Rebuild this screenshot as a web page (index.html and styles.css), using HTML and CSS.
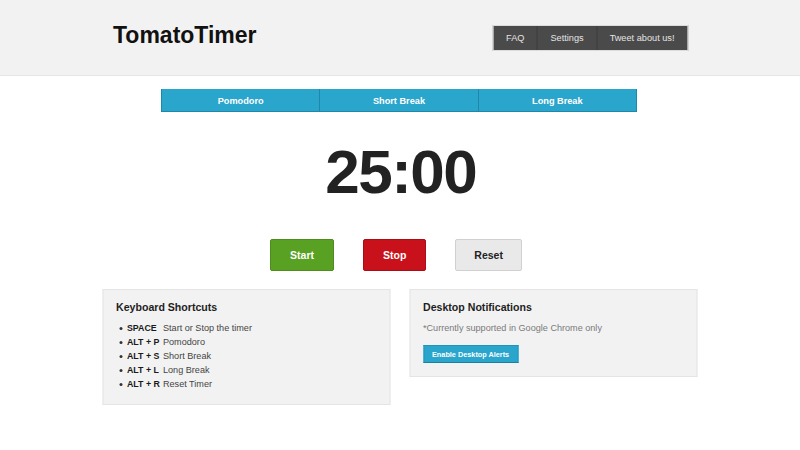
FILE: index.html
```html
<!DOCTYPE html>
<html lang="en">
<head>
<meta charset="utf-8">
<title>TomatoTimer</title>
<link rel="stylesheet" href="styles.css">
</head>
<body>
<header class="header">
  <div class="header-inner">
    <h1 class="logo">TomatoTimer</h1>
    <nav class="nav">
      <a class="nav-item">FAQ</a>
      <a class="nav-item">Settings</a>
      <a class="nav-item">Tweet about us!</a>
    </nav>
  </div>
</header>
<main class="main">
  <div class="tabs">
    <div class="tab">Pomodoro</div>
    <div class="tab">Short Break</div>
    <div class="tab">Long Break</div>
  </div>
  <div class="timer">25:00</div>
  <div class="controls">
    <button class="btn btn-start">Start</button>
    <button class="btn btn-stop">Stop</button>
    <button class="btn btn-reset">Reset</button>
  </div>
  <div class="panels">
    <section class="panel">
      <h2 class="panel-title">Keyboard Shortcuts</h2>
      <ul class="shortcuts">
        <li><span class="key">SPACE</span>Start or Stop the timer</li>
        <li><span class="key">ALT + P</span>Pomodoro</li>
        <li><span class="key">ALT + S</span>Short Break</li>
        <li><span class="key">ALT + L</span>Long Break</li>
        <li><span class="key">ALT + R</span>Reset Timer</li>
      </ul>
    </section>
    <section class="panel">
      <h2 class="panel-title">Desktop Notifications</h2>
      <p class="note">*Currently supported in Google Chrome only</p>
      <button class="alert-btn">Enable Desktop Alerts</button>
    </section>
  </div>
</main>
</body>
</html>
```
FILE: styles.css
```css
* { box-sizing: border-box; }
html, body { margin: 0; padding: 0; background: #fff; }
body {
  font-family: "Liberation Sans", Arial, sans-serif;
  color: #222;
}
.header {
  height: 76px;
  background: #f2f2f2;
  border-bottom: 1px solid #e6e6e6;
  padding-top: 25px;
}
.header-inner {
  width: 575px;
  margin: 0 auto;
  display: flex;
  justify-content: space-between;
  align-items: flex-start;
  transform: translateX(0.5px);
}
.logo {
  margin: 0;
  font-size: 23px;
  line-height: 21px;
  font-weight: bold;
  color: #111;
}
.nav {
  display: flex;
  background: #4a4a4a;
  border: 1px solid #fafafa;
  outline: 1px solid #dcdcdc;
  outline-offset: -1px;
}
.nav-item {
  display: block;
  height: 24px;
  line-height: 24px;
  padding: 0 12.5px;
  font-size: 9.2px;
  color: #e4e4e4;
  background: #4a4a4a;
}
.nav-item + .nav-item { border-left: 1px solid #3c3c3c; }

.main { display: flex; flex-direction: column; align-items: center; }
.tabs {
  margin-top: 13px;
  width: 476px;
  display: flex;
  transform: translateX(-1px);
}
.tab {
  flex: 1;
  height: 23px;
  line-height: 24px;
  text-align: center;
  font-size: 9.2px;
  font-weight: bold;
  color: #fff;
  background: #2aa5cc;
  border-left: 1px solid #1f88aa;
  border-bottom: 1px solid #1f88aa;
}
.tab:last-child { border-right: 1px solid #1f88aa; }
.timer {
  margin-top: 29px;
  font-size: 62px;
  line-height: 62px;
  font-weight: bold;
  letter-spacing: -1.5px;
  color: #222;
  padding-left: 1.5px;
}
.controls {
  margin-top: 36px;
  display: flex;
  gap: 29px;
  padding-right: 8px;
}
.btn {
  height: 32px;
  padding: 0 19px;
  font-family: inherit;
  font-size: 10.5px;
  font-weight: bold;
  border-radius: 2px;
  border: 1px solid;
  color: #fff;
}
.btn-start { background: #59a123; border-color: #4d8c1d; }
.btn-stop { background: #c8111a; border-color: #a80e15; }
.btn-reset { background: #e9e9e9; border-color: #d0d0d0; color: #222; padding: 0 18px; }

.panels {
  margin-top: 18px;
  display: flex;
  gap: 19px;
  align-items: flex-start;
  transform: translateX(-0.5px);
}
.panel {
  width: 288px;
  background: #f2f2f2;
  border: 1px solid #e4e4e4;
  padding: 11px 13px 13px 13px;
}
.panel-title {
  margin: 0;
  font-size: 10.6px;
  line-height: 13px;
  font-weight: bold;
  color: #1e1e1e;
}
.shortcuts {
  list-style: none;
  margin: 7px 0 0 0;
  padding: 0;
}
.shortcuts li {
  position: relative;
  height: 14px;
  line-height: 14px;
  font-size: 9.1px;
  color: #444;
  padding-left: 11px;
}
.shortcuts li::before {
  content: "";
  position: absolute;
  left: 3px;
  top: 6px;
  width: 3px;
  height: 3px;
  border-radius: 50%;
  background: #333;
}
.key {
  display: inline-block;
  width: 36px;
  font-size: 8.8px;
  font-weight: bold;
  color: #1a1a1a;
}
.note {
  margin: 7px 0 0 0;
  font-size: 9.1px;
  line-height: 14px;
  color: #7a7a7a;
}
.alert-btn {
  margin-top: 10px;
  height: 18px;
  padding: 0 8px;
  font-family: inherit;
  font-size: 7.3px;
  font-weight: bold;
  color: #fff;
  background: #2aa5cc;
  border: 1px solid #2095bc;
  border-bottom-color: #1a7fa1;
  border-radius: 0;
}
```
